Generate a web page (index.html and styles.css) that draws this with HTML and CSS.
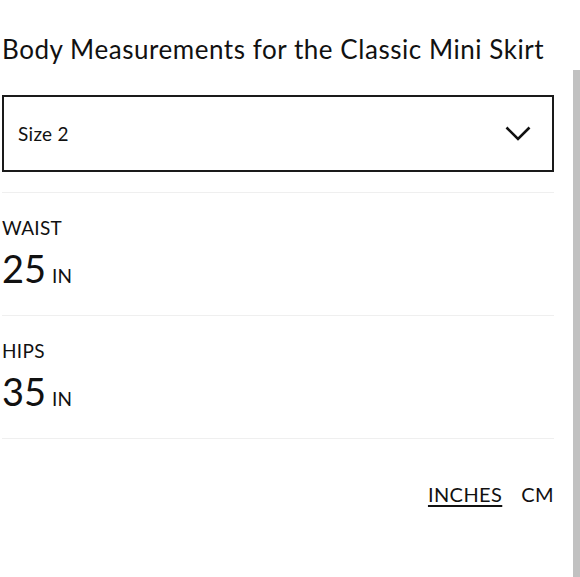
FILE: index.html
```html
<!DOCTYPE html>
<html>
<head>
<meta charset="utf-8">
<link rel="stylesheet" href="styles.css">
</head>
<body>
<div class="page">
  <main class="content">
    <h1 class="title">Body Measurements for the Classic Mini Skirt</h1>
    <div class="select">
      <span class="select-value">Size 2</span>
      <svg class="chevron" width="26" height="15" viewBox="0 0 26 15"><path d="M1.5 1.5 L13 13 L24.5 1.5" fill="none" stroke="#111" stroke-width="2.6"/></svg>
    </div>
    <section class="measure">
      <div class="label">WAIST</div>
      <div class="value"><span class="num">25</span><span class="unit">IN</span></div>
    </section>
    <section class="measure">
      <div class="label">HIPS</div>
      <div class="value"><span class="num">35</span><span class="unit">IN</span></div>
    </section>
    <div class="units">
      <span class="unit-link active">INCHES</span>
      <span class="unit-link">CM</span>
    </div>
  </main>
  <div class="scrollbar"></div>
</div>
</body>
</html>
```
FILE: styles.css
```css
html, body {
  margin: 0;
  padding: 0;
  background: #fff;
}
body {
  font-family: "Lato", "Noto Sans", sans-serif;
  color: #111;
}
.page {
  display: flex;
  height: 577px;
  overflow: hidden;
}
.content {
  width: 552px;
  margin-left: 2px;
}
.title {
  font-size: 26px;
  font-weight: 400;
  margin: 33px 0 0 0;
  line-height: 32px;
  white-space: nowrap;
  letter-spacing: 0.55px;
}
.select {
  margin-top: 30px;
  height: 73px;
  border: 2px solid #1a1a1a;
  display: flex;
  align-items: center;
  justify-content: space-between;
  padding: 0 21px 0 14px;
}
.select-value {
  font-size: 19px;
  letter-spacing: 0.3px;
}
.chevron {
  display: block;
}
.measure {
  border-top: 1px solid #efefef;
  height: 123px;
  padding-top: 24px;
  box-sizing: border-box;
}
.select + .measure {
  margin-top: 20px;
}
.label {
  font-size: 19px;
  line-height: 22px;
  letter-spacing: 0.3px;
}
.value {
  margin-top: 9px;
  display: flex;
  align-items: baseline;
}
.num {
  font-size: 38px;
  line-height: 40px;
}
.unit {
  font-size: 19px;
  margin-left: 6px;
}
.units {
  border-top: 1px solid #efefef;
  display: flex;
  justify-content: flex-end;
  gap: 19px;
  padding-top: 43px;
}
.unit-link {
  font-size: 20px;
  letter-spacing: 0.4px;
}
.unit-link.active {
  text-decoration: underline;
  text-underline-offset: 3px;
}
.scrollbar {
  margin-left: 19px;
  margin-top: 70px;
  width: 7px;
  background: #c1c1c1;
}
```
